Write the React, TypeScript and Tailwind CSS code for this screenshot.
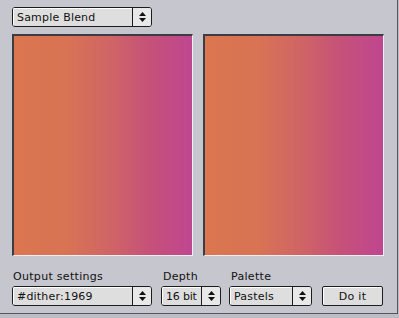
import React from 'react';

const font = { fontFamily: '"DejaVu Sans", Verdana, sans-serif' };

function Arrows() {
  return (
    <svg width="9" height="12" viewBox="0 0 9 12" className="block">
      <path d="M4.5 1 L8 5 L1 5 Z" fill="#111" />
      <path d="M4.5 11 L8 7 L1 7 Z" fill="#111" />
    </svg>
  );
}

interface SelectProps {
  label: string;
  width: string;
  tight?: boolean;
}

function Select({ label, width, tight = false }: SelectProps) {
  const spacing = tight ? 'tracking-[-0.2px]' : 'tracking-[0.2px]';
  return (
    <div
      className={`flex h-[20px] ${width} rounded-[3px] border border-[#1c1c1c] bg-[#dedede] overflow-hidden`}
    >
      <div className={`flex flex-1 items-center pl-[3px] border-t border-l border-white text-[11px] leading-none ${spacing} text-[#111] whitespace-nowrap`}>
        {label}
      </div>
      <div className="flex w-[19px] shrink-0 items-center justify-center border-l border-[#1c1c1c] bg-[#e8e8e8]">
        <Arrows />
      </div>
    </div>
  );
}

function Preview() {
  return (
    <div className="h-[222px] w-[181px] border-t-2 border-l-2 border-t-[#3c3c44] border-l-[#3c3c44] border-b border-r border-b-[#f0f0f4] border-r-[#f0f0f4]">
      <div className="h-full w-full bg-[linear-gradient(90deg,#db7650_0%,#d87354_30%,#cf6466_55%,#c65278_75%,#bf4690_100%)]" />
    </div>
  );
}

export default function App() {
  return (
    <div className="h-[318px] w-[399px] bg-[#bdbdc5]" style={font}>
      <div className="h-[314px] w-[398px] border-r border-b border-[#55555c] bg-[#c6c6ce] pl-[12px] pt-[7px]">
        <Select label="Sample Blend" width="w-[140px]" />
        <div className="mt-[7px] flex gap-[10px]">
          <Preview />
          <Preview />
        </div>
        <div className="mt-[14px] flex items-end">
          <div className="flex flex-col">
            <span className="mb-[3px] pl-[1px] text-[11px] leading-[13px] tracking-[0.3px] text-[#111]">Output settings</span>
            <Select label="#dither:1969" width="w-[140px]" />
          </div>
          <div className="ml-[9px] flex flex-col">
            <span className="mb-[3px] pl-[2px] text-[11px] leading-[13px] tracking-[0.3px] text-[#111]">Depth</span>
            <Select label="16 bit" width="w-[60px]" tight />
          </div>
          <div className="ml-[8px] flex flex-col">
            <span className="mb-[3px] pl-[2px] text-[11px] leading-[13px] tracking-[0.3px] text-[#111]">Palette</span>
            <Select label="Pastels" width="w-[83px]" />
          </div>
          <button className="ml-[10px] flex h-[20px] w-[61px] items-center justify-center rounded-[2px] border border-[#1c1c1c] bg-[#dedede] text-[11px] leading-none tracking-[0.3px] text-[#111] shadow-[inset_1px_1px_0_#fff]">
            Do it
          </button>
        </div>
      </div>
    </div>
  );
}
